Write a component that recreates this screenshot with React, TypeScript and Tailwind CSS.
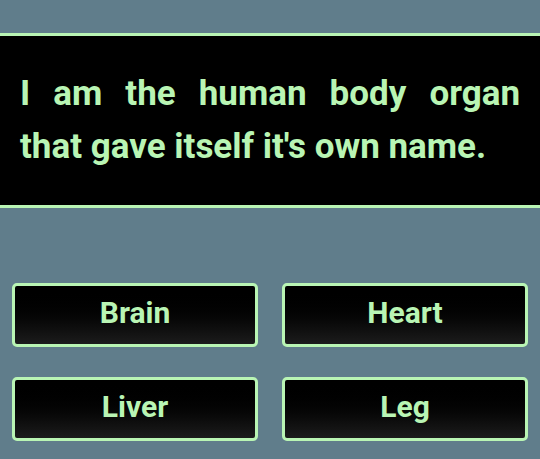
export default function App() {
  const answers = ["Brain", "Heart", "Liver", "Leg"];
  return (
    <div
      className="w-[540px] h-[459px] bg-[#607d8b] overflow-hidden pt-[33px]"
      style={{ fontFamily: "Roboto, 'Liberation Sans', sans-serif" }}
    >
      <div className="bg-black border-y-[3px] border-[#b9f5b4] px-5 pt-[31px] pb-[32px]">
        <div className="text-[35px] leading-[53px] font-bold text-[#b9f5b4]">
          <p className="text-justify [text-align-last:justify]">I am the human body organ</p>
          <p>that gave itself it's own name.</p>
        </div>
      </div>
      <div className="grid grid-cols-2 gap-x-6 gap-y-[30px] px-3 pt-[75px]">
        {answers.map((a) => (
          <button
            key={a}
            className="h-[64px] rounded-[5px] border-[3px] border-[#b9f5b4] bg-gradient-to-b from-black to-[#1c1c1c] text-[30px] font-bold text-[#b9f5b4] pb-[5px] flex items-center justify-center"
          >
            {a}
          </button>
        ))}
      </div>
    </div>
  );
}
